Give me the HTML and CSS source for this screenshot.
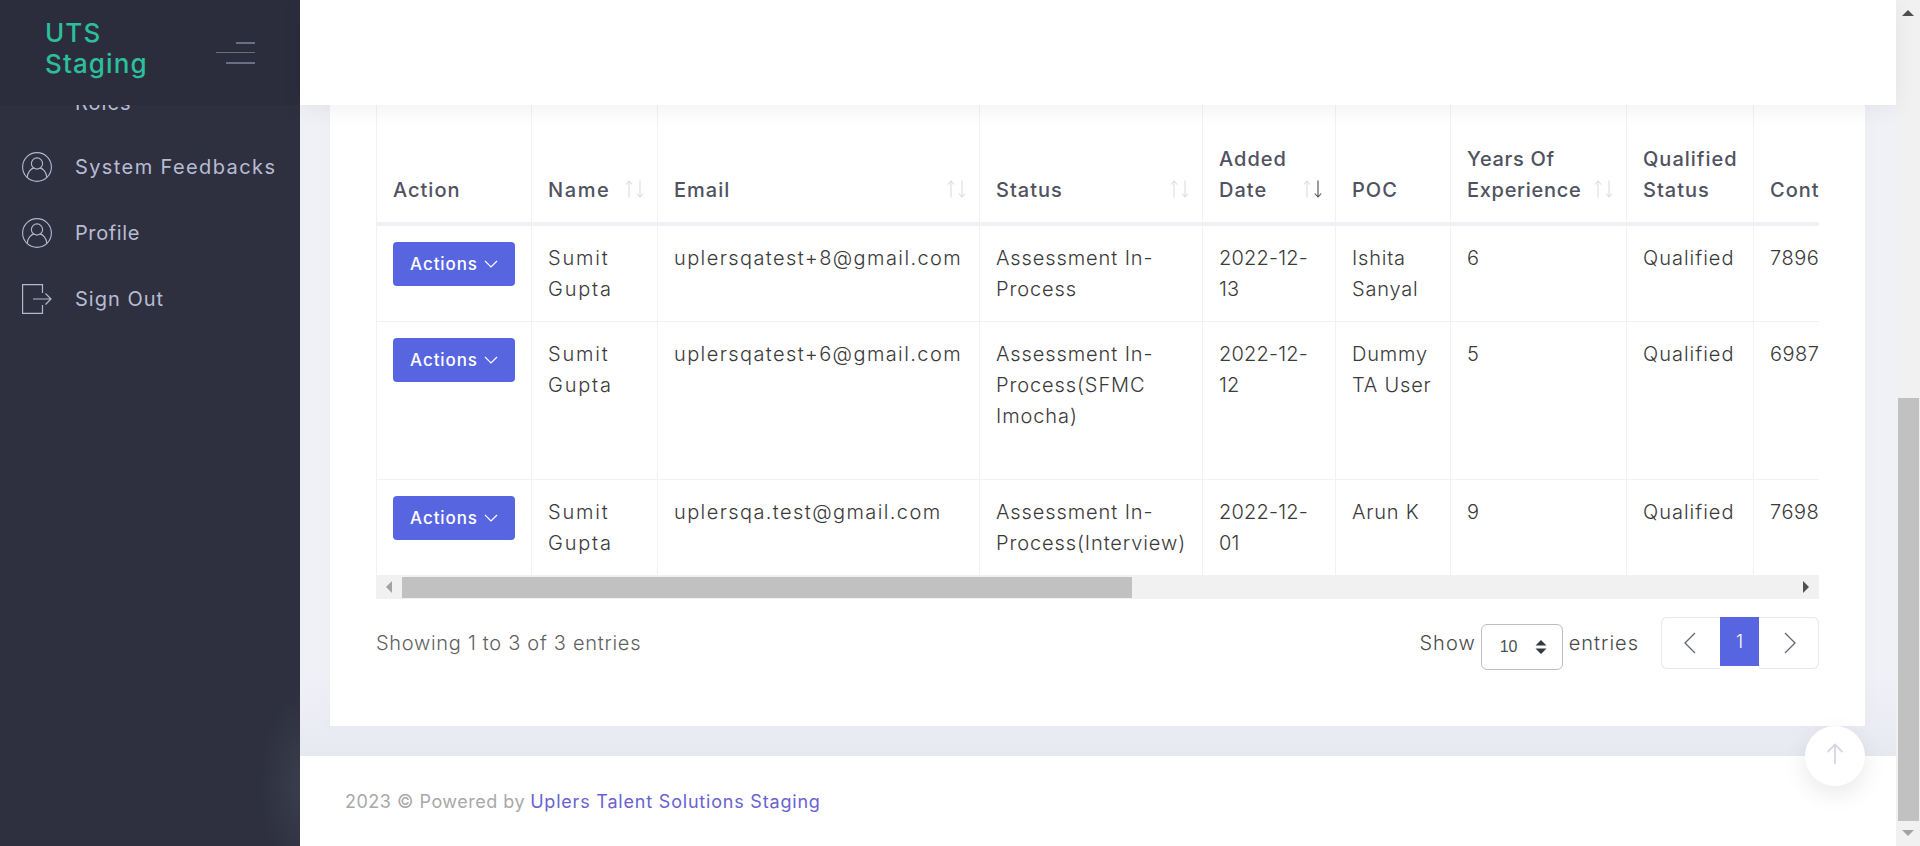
FILE: index.html
```html
<!DOCTYPE html>
<html lang="en">
<head>
<meta charset="utf-8">
<title>UTS Staging</title>
<link rel="stylesheet" href="styles.css">
</head>
<body>
<div class="app">
  <aside class="sidebar">
    <div class="brand">
      <div class="brand-name">UTS<br>Staging</div>
      <div class="burger"><span class="b1"></span><span class="b2"></span><span class="b3"></span></div>
    </div>
    <div class="menu-clip">
      <ul class="menu">
        <li><span class="menu-icon"></span><span>Roles</span></li>
        <li>
          <svg class="menu-icon" viewBox="0 0 30 30"><g fill="none" stroke="#b4b8ce" stroke-width="1.1"><circle cx="15" cy="15" r="14.4"/><circle cx="15" cy="11.5" r="5.6"/><path d="M5.2 25.5c.3-5.5 3.8-9 7-9.6M24.8 25.5c-.3-5.5-3.8-9-7-9.6"/></g></svg>
          <span>System Feedbacks</span>
        </li>
        <li>
          <svg class="menu-icon" viewBox="0 0 30 30"><g fill="none" stroke="#b4b8ce" stroke-width="1.1"><circle cx="15" cy="15" r="14.4"/><circle cx="15" cy="11.5" r="5.6"/><path d="M5.2 25.5c.3-5.5 3.8-9 7-9.6M24.8 25.5c-.3-5.5-3.8-9-7-9.6"/></g></svg>
          <span>Profile</span>
        </li>
        <li>
          <svg class="menu-icon" viewBox="0 0 30 30"><g fill="none" stroke="#b4b8ce" stroke-width="1.2"><path d="M20.5 9V.6H.6v28.8h19.9V21"/><path d="M11 15h18M23.500 9.500 29 15l-5.500 5.500"/></g></svg>
          <span>Sign Out</span>
        </li>
      </ul>
    </div>
  </aside>

  <div class="main">
    <header class="topbar"></header>
    <main class="content">
      <section class="card">
        <div class="table-wrap">
          <table class="grid">
            <colgroup>
              <col class="c1"><col class="c2"><col class="c3"><col class="c4"><col class="c5"><col class="c6"><col class="c7"><col class="c8"><col class="c9">
            </colgroup>
            <thead>
              <tr>
                <th>Action</th>
                <th class="sortable">Name<svg class="sort" viewBox="0 0 19 18"><path class="off" d="M4 17.500V1M.8 4.500 4 1l3.200 3.500"/><path class="off" d="M15 .5V17M11.800 13.500 15 17l3.200-3.500"/></svg></th>
                <th class="sortable">Email<svg class="sort" viewBox="0 0 19 18"><path class="off" d="M4 17.500V1M.8 4.500 4 1l3.200 3.500"/><path class="off" d="M15 .5V17M11.800 13.500 15 17l3.200-3.500"/></svg></th>
                <th class="sortable">Status<svg class="sort" viewBox="0 0 19 18"><path class="off" d="M4 17.500V1M.8 4.500 4 1l3.200 3.500"/><path class="off" d="M15 .5V17M11.800 13.500 15 17l3.200-3.500"/></svg></th>
                <th class="sortable">Added Date<svg class="sort" viewBox="0 0 19 18"><path class="off" d="M4 17.500V1M.8 4.500 4 1l3.200 3.500"/><path class="on" d="M15 .5V17M11.800 13.500 15 17l3.200-3.500"/></svg></th>
                <th>POC</th>
                <th class="sortable">Years Of Experience<svg class="sort" viewBox="0 0 19 18"><path class="off" d="M4 17.500V1M.8 4.500 4 1l3.200 3.500"/><path class="off" d="M15 .5V17M11.800 13.500 15 17l3.200-3.500"/></svg></th>
                <th>Qualified Status</th>
                <th>Contact Number</th>
              </tr>
            </thead>
            <tbody>
              <tr class="r1">
                <td><button class="act">Actions<svg viewBox="0 0 14 8"><path d="M1 1l6 6 6-6"/></svg></button></td>
                <td>Sumit Gupta</td><td>uplersqatest+8@gmail.com</td><td>Assessment In-Process</td><td>2022-12-13</td><td>Ishita Sanyal</td><td>6</td><td>Qualified</td><td class="nw">78965</td>
              </tr>
              <tr class="r2">
                <td><button class="act">Actions<svg viewBox="0 0 14 8"><path d="M1 1l6 6 6-6"/></svg></button></td>
                <td>Sumit Gupta</td><td>uplersqatest+6@gmail.com</td><td>Assessment In-Process(SFMC Imocha)</td><td>2022-12-12</td><td>Dummy TA User</td><td>5</td><td>Qualified</td><td class="nw">69875</td>
              </tr>
              <tr class="r3">
                <td><button class="act">Actions<svg viewBox="0 0 14 8"><path d="M1 1l6 6 6-6"/></svg></button></td>
                <td>Sumit Gupta</td><td>uplersqa.test@gmail.com</td><td>Assessment In-Process(Interview)</td><td>2022-12-01</td><td>Arun K</td><td>9</td><td>Qualified</td><td class="nw">76985</td>
              </tr>
            </tbody>
          </table>
        </div>
        <div class="hbar">
          <span class="tri tri-left"></span>
          <span class="hthumb"></span>
          <span class="tri tri-right"></span>
        </div>
        <div class="pager-row">
          <div class="info">Showing 1 to 3 of 3 entries</div>
          <div class="pager-side">
            <span class="len">Show</span>
            <span class="select">10<svg viewBox="0 0 12 16"><path d="M6 1l5.500 5.500H.5zM6 15 .5 9.500h11z"/></svg></span>
            <span class="len">entries</span>
            <div class="pages">
              <a class="pg prev"><svg viewBox="0 0 12 22"><path d="M11 1 1 11l10 10"/></svg></a>
              <a class="pg cur">1</a>
              <a class="pg next"><svg viewBox="0 0 12 22"><path d="M1 1l10 10L1 21"/></svg></a>
            </div>
          </div>
        </div>
      </section>
    </main>
    <footer class="footer">2023 © Powered by <a class="flink">Uplers Talent Solutions Staging</a></footer>
    <div class="to-top"><svg viewBox="0 0 18 22"><path d="M9 21V1.500M1.500 9 9 1.500 16.500 9"/></svg></div>
  </div>

  <div class="vbar">
    <span class="tri tri-up"></span>
    <span class="vspace"></span>
    <span class="vthumb"></span>
    <span class="tri tri-down"></span>
  </div>
</div>
</body>
</html>
```
FILE: styles.css
```css
* { box-sizing: border-box; }
html, body { margin: 0; padding: 0; height: 100%; overflow: hidden; }
body { font-family: Inter, "Noto Sans", "Liberation Sans", sans-serif; font-size: 18px; color: #3d3d3d; background: #fff; }

.app { display: flex; width: 1920px; height: 846px; overflow: hidden; }

/* sidebar */
.sidebar { width: 300px; flex: none; display: flex; flex-direction: column; background: radial-gradient(ellipse 40px 90px at 100% 785px, #3a3d4b, #2e3040 100%); }
.brand { height: 105px; flex: none; display: flex; align-items: center; justify-content: space-between; padding: 0 45px 10px; background: #2b2d3d; position: relative; z-index: 2; }
.brand-name { color: #2bbf9b; font-size: 26px; font-weight: 500; line-height: 31px; letter-spacing: 1.100px; }
.burger { display: flex; flex-direction: column; align-items: flex-end; width: 39px; margin-top: 10px; }
.burger span { display: block; background: #6b6d80; }
.b1 { width: 19px; height: 2px; }
.b2 { width: 39px; height: 1px; margin: 8px 0 9px; }
.b3 { width: 29px; height: 2px; }
.menu-clip { flex: 1; overflow: hidden; }
.menu { list-style: none; margin: -33px 0 0; padding: 0 0 0 22px; color: #b8bcd2; font-size: 20px; letter-spacing: 1px; }
.menu li { height: 66px; display: flex; align-items: center; gap: 23px; white-space: nowrap; }
.menu li:first-child { height: 62px; }
.menu li:nth-child(2) { letter-spacing: 1.400px; }
.menu li:nth-child(3) { letter-spacing: .6px; }
.menu-icon { width: 30px; height: 30px; flex: none; display: block; }

/* main column */
.main { flex: 1; min-width: 0; display: flex; flex-direction: column; position: relative; background: #f0f1f7; }
.topbar { height: 105px; flex: none; background: #fff; box-shadow: 0 4px 22px rgba(0, 0, 0, .06); position: relative; z-index: 2; }
.content { flex: 1; min-height: 0; padding: 0 31px 30px 30px; background: linear-gradient(#f0f1f7 0, #f0f1f7 88%, #e7e9f0 100%); }
.card { height: 621px; padding: 0 46px; background: #fff; box-shadow: 0 0 22px rgba(0, 0, 0, .02); }
.footer { height: 90px; flex: none; background: #fff; padding: 0 0 0 45px; display: flex; align-items: center; gap: 5px; color: #a8a8a8; font-size: 18px; letter-spacing: .5px; }
.flink { color: #6a62cf; letter-spacing: .8px; }

/* table */
.table-wrap { width: 1443px; height: 470px; overflow: hidden; }
.grid { border-collapse: collapse; table-layout: fixed; width: 1622px; }
.c1 { width: 155px; } .c2 { width: 126px; } .c3 { width: 322px; } .c4 { width: 223px; }
.c5 { width: 133px; } .c6 { width: 115px; } .c7 { width: 176px; } .c8 { width: 127px; } .c9 { width: 245px; }
.grid th, .grid td { padding: 16px; border-left: 1px solid #f1f2f6; border-right: 1px solid #f1f2f6; text-align: left; vertical-align: top; line-height: 31px; }
.grid th { height: 119px; vertical-align: bottom; font-weight: 500; font-size: 20px; letter-spacing: 1px; color: #50525f; border-bottom: 4px solid #f1f2f6; position: relative; padding-right: 26px; }
.grid th:nth-child(7) { letter-spacing: .7px; }
.grid th:nth-child(2) { letter-spacing: 1.600px; }
.grid td { font-weight: 300; font-size: 20px; color: #3a3a3a; border-bottom: 1px solid #f1f2f6; padding-top: 17px; letter-spacing: 1px; }
.grid td:first-child { padding-top: 16px; }
.grid td:nth-child(2) { letter-spacing: 1.800px; }
.grid td:nth-child(3) { letter-spacing: 1.400px; }
.grid td:nth-child(4) { letter-spacing: .9px; }
.grid td:nth-child(5) { letter-spacing: .2px; }
.grid td:nth-child(6) { letter-spacing: .8px; }
.grid td:nth-child(7) { letter-spacing: .2px; }
.grid td:nth-child(9) { letter-spacing: .5px; }
.r1 td { height: 92px; }
.r2 td { height: 158px; }
.r3 td { height: 96px; border-bottom: 0; }
.nw { white-space: nowrap; }
.sort { position: absolute; right: 13px; bottom: 24px; width: 19px; height: 18px; fill: none; }
.sort .off { stroke: #dcdde2; stroke-width: 1.100; }
.sort .on { stroke: #4b4c57; stroke-width: 1.100; }
.act { display: flex; align-items: center; justify-content: center; gap: 6px; width: 122px; height: 44px; border: 0; border-radius: 4px; background: #5766e0; color: #fff; font: 500 17px Inter, sans-serif; letter-spacing: .9px; }
.act svg { width: 14px; height: 8px; fill: none; stroke: #fff; stroke-width: 1.200; }

/* horizontal scrollbar */
.hbar { height: 24px; display: flex; align-items: center; background: #f1f1f1; width: 1443px; }
.hthumb { width: 730px; height: 21px; margin-left: 10px; background: #c1c1c1; }
.tri { display: block; width: 0; height: 0; flex: none; }
.tri-left { margin-left: 10px; border-style: solid; border-color: transparent #a3a3a3 transparent transparent; border-width: 6px 6px 6px 0; }
.tri-right { margin-left: auto; margin-right: 10px; border-style: solid; border-color: transparent transparent transparent #505050; border-width: 6px 0 6px 6px; }

/* pager */
.pager-row { display: flex; justify-content: space-between; align-items: flex-start; padding-top: 18px; }
.info { font-weight: 300; font-size: 20px; letter-spacing: .7px; color: #5f5f5f; line-height: 52px; }
.pager-side { display: flex; align-items: flex-start; }
.len { font-size: 20px; font-weight: 300; letter-spacing: 1px; color: #4a4a4a; line-height: 52px; }
.select { width: 82px; height: 46px; margin: 7px 6px 0 5px; border: 1px solid #bcbdcc; border-radius: 6px; display: flex; align-items: center; justify-content: space-between; padding: 0 15px 0 18px; font: 16px "Liberation Sans", sans-serif; color: #495057; }
.select svg { width: 12px; height: 16px; fill: #343a40; }
.pages { display: flex; margin-left: 22px; align-items: flex-start; }
.pg { height: 52px; display: flex; align-items: center; justify-content: center; border: 1px solid #e6e7ee; background: #fff; }
.pg svg { width: 12px; height: 22px; fill: none; stroke: #5f6675; stroke-width: 1.300; }
.prev { width: 59px; border-right: 0; border-radius: 6px 0 0 6px; padding-right: 2px; }
.next { width: 60px; border-left: 0; border-radius: 0 6px 6px 0; padding-left: 2px; }
.cur { width: 39px; height: 49px; background: #5766e0; border: 0; color: #fff; font-weight: 300; font-size: 18px; }

/* to top */
.to-top { position: absolute; left: 1505px; top: 726px; width: 60px; height: 60px; border-radius: 50%; background: #fff; box-shadow: 0 8px 24px rgba(0, 0, 0, .09); display: flex; align-items: center; justify-content: center; z-index: 3; }
.to-top svg { width: 18px; height: 22px; fill: none; stroke: #d5d5e6; stroke-width: 1.800; margin-bottom: 4px; }

/* vertical scrollbar */
.vbar { width: 24px; flex: none; display: flex; flex-direction: column; align-items: center; background: #f1f1f1; height: 846px; }
.vspace { height: 382px; flex: none; }
.vthumb { width: 21px; height: 423px; flex: none; background: #c1c1c1; }
.tri-up { margin-top: 10px; border-style: solid; border-color: transparent transparent #505050; border-width: 0 6px 6px; }
.tri-down { margin-top: 9px; border-style: solid; border-color: #a3a3a3 transparent transparent; border-width: 6px 6px 0; }
```
